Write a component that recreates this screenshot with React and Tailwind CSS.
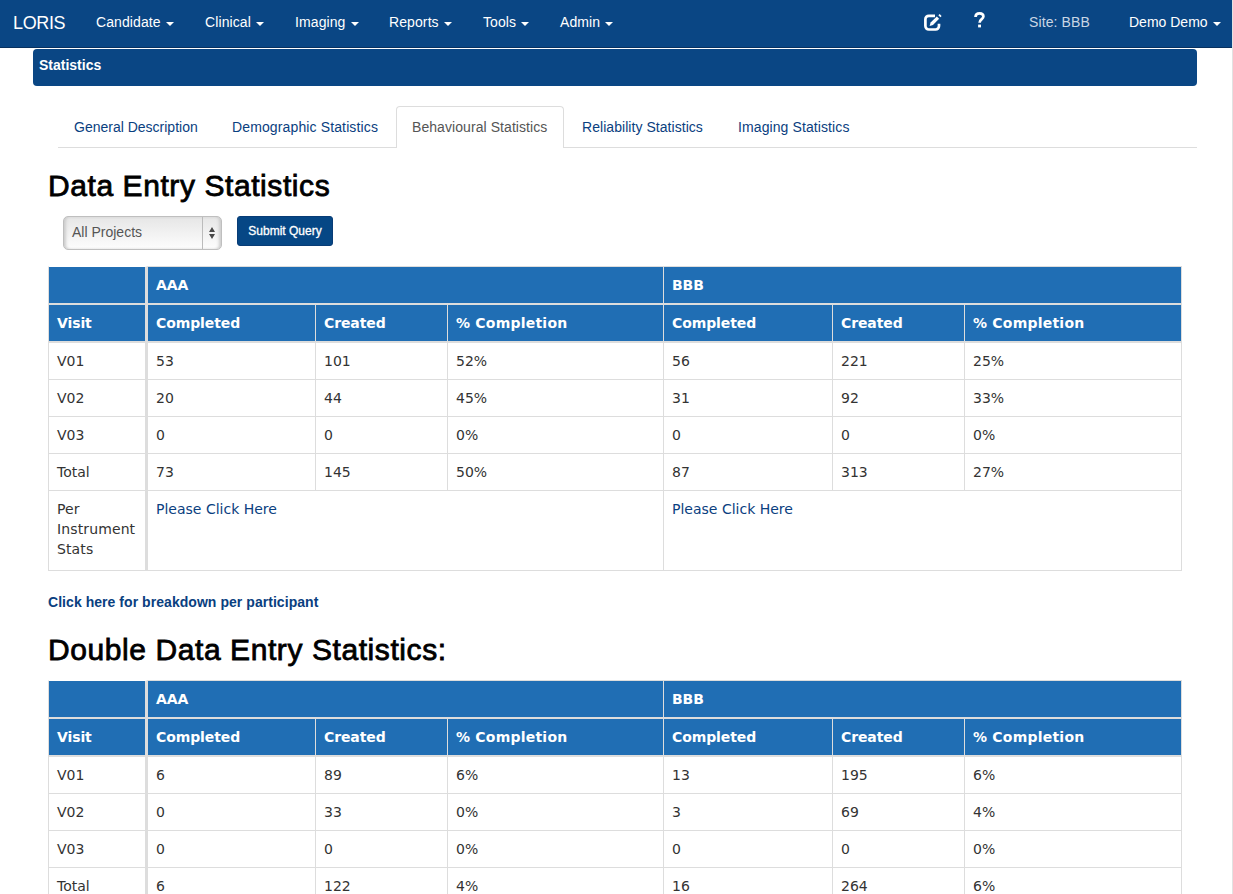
const cx = (...a) => a.filter(Boolean).join(" ");

function Caret() {
  return (
    <svg className="ml-[5px] mt-1 h-1 w-2 shrink-0" viewBox="0 0 8 4" fill="currentColor">
      <path d="M0 0h8L4 4z" />
    </svg>
  );
}

function NavItem({ label, width, track }) {
  return (
    <a className={cx("flex h-[44px] items-center whitespace-nowrap text-white", width)}>
      <span className={track}>{label}</span>
      <Caret />
    </a>
  );
}

function Navbar() {
  return (
    <nav className="flex h-12 items-start justify-between border-b border-[#08315f] bg-[#0a4684] pr-[11px] text-sm">
      <div className="flex">
        <a className="flex h-[46px] w-24 items-center pl-[13px] text-lg text-white">
          <span className="tracking-[-0.35px]">LORIS</span>
        </a>
        <NavItem label="Candidate" width="w-[109px]" track="tracking-[0.1px]" />
        <NavItem label="Clinical" width="w-[90px]" track="tracking-[0.1px]" />
        <NavItem label="Imaging" width="w-[94px]" track="tracking-[0.1px]" />
        <NavItem label="Reports" width="w-[94px]" track="tracking-[0.1px]" />
        <NavItem label="Tools" width="w-[77px]" track="tracking-[0.1px]" />
        <NavItem label="Admin" width="w-[60px]" track="tracking-[0.1px]" />
      </div>
      <div className="flex h-[44px] items-center text-white">
        <svg className="mr-8 h-[19px] w-[19px]" viewBox="0 0 19 19" fill="none">
          <path d="M12 2.8H5.8A3.4 3.4 0 0 0 2.4 6.2v6.9a3.4 3.4 0 0 0 3.4 3.4h6.8a3.4 3.4 0 0 0 3.4-3.4V10.8" stroke="currentColor" strokeWidth="2.7" />
          <path d="M6.6 12.9l1-3.5 6.2-6 2.3 2.3-6.1 6.2z" fill="currentColor" />
          <path d="M15.4 2.2l1.3-1.2 1.9 1.9-1.2 1.3z" fill="currentColor" />
        </svg>
        <svg className="mr-[44px] -mt-1 h-4 w-[11px]" viewBox="0 0 11 16" fill="none">
          <path d="M1.5 5C1.6 2.6 3 1.4 5.5 1.4S9.4 2.6 9.4 4.6C9.4 7.2 5.6 7.2 5.6 10.8" stroke="currentColor" strokeWidth="2.7" />
          <path d="M4.1 12.6h2.9v2.8H4.1z" fill="currentColor" />
        </svg>
        <span className="w-[100px] whitespace-nowrap tracking-[0.1px] text-[#c9d6e4]">Site: BBB</span>
        <span className="w-[79px] whitespace-nowrap">Demo Demo</span>
        <Caret />
      </div>
    </nav>
  );
}

const tabs = [
  { label: "General Description", width: "w-[158px]" },
  { label: "Demographic Statistics", width: "w-[180px]", track: "tracking-[0.13px]" },
  { label: "Behavioural Statistics", width: "w-[168px]", track: "tracking-[0.07px]", active: true },
  { label: "Reliability Statistics", width: "w-[156px]", track: "tracking-[0.05px]" },
  { label: "Imaging Statistics", width: "w-[144px]", track: "tracking-[0.1px]" },
];

function Tabs() {
  return (
    <div className="mr-[35px] ml-[58px] mt-5 flex h-[42px] border-b border-[#ddd] text-sm">
      {tabs.map((t) => (
        <a
          key={t.label}
          className={cx(
            "flex h-[42px] shrink-0 items-center whitespace-nowrap",
            t.width,
            t.track,
            t.active
              ? "mr-0.5 rounded-t border border-b-0 border-[#ddd] bg-white pb-px pl-[15px] text-[#555]"
              : "pl-4 text-[#0a4080]"
          )}
        >
          {t.label}
        </a>
      ))}
    </div>
  );
}

function Cell({ first, head, top, span, children }) {
  const Tag = head ? "th" : "td";
  return (
    <Tag
      colSpan={span}
      className={cx(
        "border-[#ddd] p-2 text-left align-top",
        first ? "border-l border-r-3" : "border-r",
        head ? "border-b-2 bg-[#206eb4] font-bold text-white" : "border-b font-normal",
        head && (children === "% Completion" ? "tracking-[0.22px]" : "tracking-[-0.1px]"),
        top && (first ? "border-t border-t-white" : "border-t")
      )}
    >
      {children}
    </Tag>
  );
}

function StatsTable({ rows, withLinks }) {
  const cols = ["Completed", "Created", "% Completion"];
  return (
    <table className="w-[1134px] table-fixed border-separate border-spacing-0 font-['DejaVu_Sans',sans-serif] text-sm leading-5 text-[#333]">
      <colgroup>
        <col className="w-[100px]" />
        <col className="w-[168px]" />
        <col className="w-[132px]" />
        <col className="w-[216px]" />
        <col className="w-[169px]" />
        <col className="w-[132px]" />
        <col className="w-[217px]" />
      </colgroup>
      <thead>
        <tr className="h-[39px]">
          <Cell first head top />
          <Cell head top span={3}>AAA</Cell>
          <Cell head top span={3}>BBB</Cell>
        </tr>
        <tr>
          <Cell first head>Visit</Cell>
          {[...cols, ...cols].map((c, i) => (
            <Cell head key={i}>{c}</Cell>
          ))}
        </tr>
      </thead>
      <tbody>
        {rows.map((r) => (
          <tr key={r[0]}>
            {r.map((c, i) => (
              <Cell key={i} first={i === 0}>{c}</Cell>
            ))}
          </tr>
        ))}
        {withLinks && (
          <tr className="h-20">
            <Cell first><span className="tracking-[0.12px]">Per Instrument Stats</span></Cell>
            <Cell span={3}><a className="text-[#0a4080]">Please Click Here</a></Cell>
            <Cell span={3}><a className="text-[#0a4080]">Please Click Here</a></Cell>
          </tr>
        )}
      </tbody>
    </table>
  );
}

const entry = [
  ["V01", "53", "101", "52%", "56", "221", "25%"],
  ["V02", "20", "44", "45%", "31", "92", "33%"],
  ["V03", "0", "0", "0%", "0", "0", "0%"],
  ["Total", "73", "145", "50%", "87", "313", "27%"],
];

const doubleEntry = [
  ["V01", "6", "89", "6%", "13", "195", "6%"],
  ["V02", "0", "33", "0%", "3", "69", "4%"],
  ["V03", "0", "0", "0%", "0", "0", "0%"],
  ["Total", "6", "122", "4%", "16", "264", "6%"],
];

function ProjectSelect() {
  return (
    <div className="flex h-[34px] w-[159px] overflow-hidden rounded-[5px] border border-[#bfbfbf] bg-linear-to-b from-[#e6e6e6] to-[#fdfdfd] text-sm text-[#555] shadow-[inset_3px_0_3px_-1px_#ccc,inset_-3px_0_3px_-1px_#ccc]">
      <span className="flex h-[30px] w-[138px] items-center pl-2">All Projects</span>
      <span className="flex grow items-center justify-center border-l border-[#bbb]">
        <svg className="h-3 w-1.5" viewBox="0 0 6 12" fill="#4a4a4a">
          <path d="M0 5l3-5 3 5zM0 7h6l-3 5z" />
        </svg>
      </span>
    </div>
  );
}

export default function App() {
  return (
    <div className="h-[894px] w-[1233px] overflow-hidden border-r border-[#e2e2e2] bg-white font-['Liberation_Sans',Arial,sans-serif]">
      <Navbar />
      <div className="mr-[35px] ml-[33px] mt-px h-[37px] rounded-[4px] bg-[#0a4684] pl-1.5 text-sm font-bold leading-[33px] text-white">
        <span>Statistics</span>
      </div>
      <Tabs />
      <main className="pl-12">
        <h2 className="mt-[21px] h-[33px] text-[30px] leading-[33px] font-normal text-black [-webkit-text-stroke:0.8px_black]">
          <span className="tracking-[0.58px]">Data Entry Statistics</span>
        </h2>
        <div className="mt-[14px] flex h-[34px] items-start gap-[15px] pl-[15px]">
          <ProjectSelect />
          <button className="h-[30px] w-24 rounded-[3px] border border-[#083c76] bg-[#064785] text-xs whitespace-nowrap text-white [-webkit-text-stroke:0.3px_white]">
            Submit Query
          </button>
        </div>
        <div className="mt-4">
          <StatsTable rows={entry} withLinks />
        </div>
        <p className="mt-[21px] text-sm leading-5 font-bold text-[#0a4080]">
          <span className="tracking-[0.05px]">Click here for breakdown per participant</span>
        </p>
        <h2 className="mt-[21px] h-[33px] text-[30px] leading-[33px] font-normal text-black [-webkit-text-stroke:0.8px_black]">
          <span className="tracking-[0.58px]">Double Data Entry Statistics:</span>
        </h2>
        <div className="mt-[14px]">
          <StatsTable rows={doubleEntry} />
        </div>
      </main>
    </div>
  );
}
